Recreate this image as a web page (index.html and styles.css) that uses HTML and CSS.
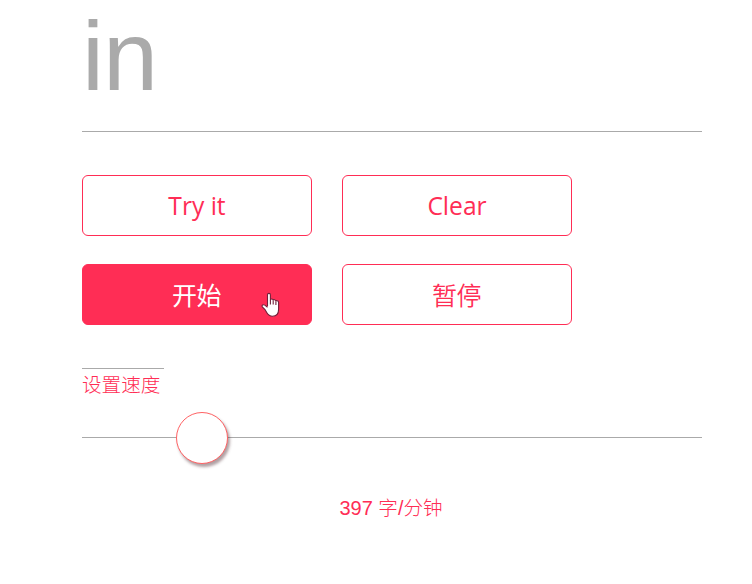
FILE: index.html
```html
<!DOCTYPE html>
<html lang="zh-CN">
<head>
<meta charset="utf-8">
<title>Speed reader</title>
<link rel="stylesheet" href="styles.css">
</head>
<body>
<main class="reader">
  <div class="word">in</div>
  <div class="buttons">
    <button class="button">Try it</button>
    <button class="button">Clear</button>
    <button class="button button-active"><span class="cjk">开始</span>
      <svg class="pointer" width="20" height="26" viewBox="0 0 20 26">
        <path d="M6.5 14V2.8C6.5 .9 9.4 .9 9.4 2.8V8.2C9.4 6.6 12.2 6.6 12.2 8.5C12.2 7.3 14.9 7.3 14.9 9.2C15.2 8.2 17.6 8.4 17.6 10.5V17.2C17.6 21.5 15.5 24.2 11.5 24.2C8.5 24.2 7 22.8 5.7 20.5L4 17.5L1.3 14.8C.3 13.2 2.3 12.2 3.8 13.1L6.5 15.2" fill="#fff" stroke="#71203a" stroke-width="1.1"/>
        <path d="M9.4 8V12.6M12.2 8.5V12.6M14.9 9.2V13" fill="none" stroke="#71203a" stroke-width="1.1"/>
      </svg>
    </button>
    <button class="button"><span class="cjk">暂停</span></button>
  </div>
  <div class="label">设置速度</div>
  <div class="slider"><div class="track"></div><div class="thumb"></div></div>
  <div class="speed">397 <span class="unit">字/分钟</span></div>
</main>
</body>
</html>
```
FILE: styles.css
```css
* { box-sizing: border-box; }
body {
  margin: 0;
  background: #fff;
  color: #ff2d55;
  font-family: "Liberation Sans", "Noto Sans CJK SC", sans-serif;
}
.reader { width: 620px; margin-left: 82px; }
.word {
  height: 132px;
  border-bottom: 1px solid #aaa;
  color: #aaa;
  font-size: 99px;
  line-height: 111px;
  letter-spacing: -1px;
}
.buttons {
  display: grid;
  grid-template-columns: 230px 230px;
  grid-auto-rows: 61px;
  gap: 28px 30px;
  margin-top: 43px;
}
.button {
  position: relative;
  padding: 1px 0 0;
  border: 1px solid #ff2d55;
  border-radius: 6px;
  background: #fff;
  color: #ff2d55;
  font: 24.6px/58px "Open Sans", "Noto Sans CJK SC", sans-serif;
}
.button-active { background: #ff2d55; color: #fff; }
.cjk {
  display: block;
  margin-top: -1px;
  padding: 0 1px 1px 0;
  font: 350 25px/58px "Noto Sans CJK SC", sans-serif;
  letter-spacing: -0.5px;
}
.button-active .cjk { font-weight: 400; }
.pointer { position: absolute; left: 177.5px; top: 27px; }
.label {
  width: 82px;
  height: 35px;
  margin-top: 43px;
  border-top: 1px solid #aaa;
  font: 300 19.6px/32px "Liberation Sans", "Noto Sans CJK SC", sans-serif;
  white-space: nowrap;
}
.slider { display: grid; align-items: center; height: 70px; }
.track, .thumb { grid-area: 1 / 1; }
.track { height: 1px; margin-bottom: 2px; background: #aaa; }
.thumb {
  width: 52px;
  height: 52px;
  margin-left: 94px;
  border: 1px solid #ff6264;
  border-radius: 50%;
  background: #fff;
  box-shadow: 2px 3px 3px rgba(80, 45, 50, .45);
}
.speed {
  height: 32px;
  margin-top: 19px;
  padding-right: 2px;
  font-size: 20px;
  line-height: 32px;
  text-align: center;
}
.unit { font-weight: 300; font-size: 19.6px; }
```
